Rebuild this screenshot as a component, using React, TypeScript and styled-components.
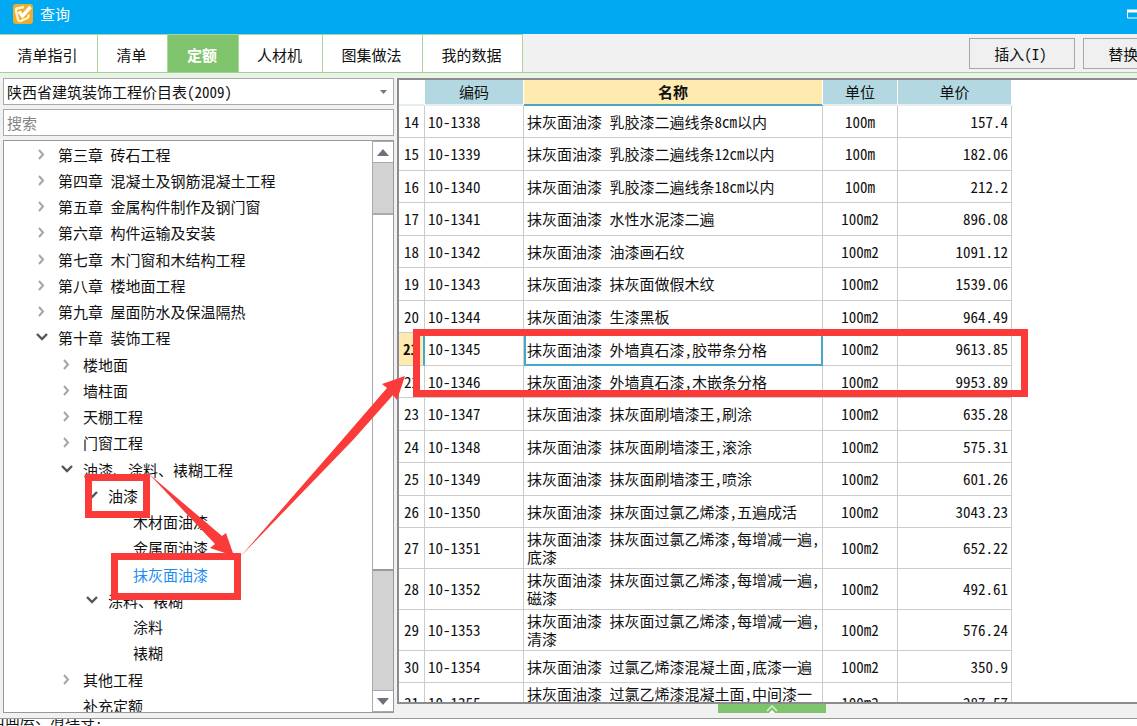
import React from 'react';
import styled, { createGlobalStyle, css } from 'styled-components';

const cjk = "'Noto Sans Mono CJK SC', 'Noto Sans CJK SC', sans-serif";

const GlobalStyle = createGlobalStyle`
  * { box-sizing: border-box; }
  body { margin: 0; background: #fff; }
  body, button, input, select, table {
    font-family: ${cjk};
    font-size: 15px;
    line-height: 18px;
    color: #111;
  }
  button, input, select { margin: 0; padding: 0; border-radius: 0; }
`;

const Window = styled.div`
  position: relative;
  display: flex;
  flex-direction: column;
  height: 100vh;
  overflow: hidden;
  background: #f1f1f1;
`;

const TitleBar = styled.header`
  display: flex;
  align-items: center;
  flex: none;
  height: 34px;
  padding: 0 0 6px 13px;
  gap: 7px;
  background: #00a9f2;
  color: #fff;
  overflow: hidden;
`;

const Title = styled.h1`
  flex: 1;
  margin: 0;
  font-size: 15px;
  font-weight: 400;
`;

const WindowButton = styled.button`
  width: 10px;
  height: 10px;
  border: 0;
  background: none;
  overflow: hidden;
  svg { display: block; }
`;

const TabBar = styled.div`
  display: flex;
  flex: none;
  height: 39px;
  border-bottom: 1px solid #a3cf98;
  overflow: hidden;
`;

const Tabs = styled.nav`
  display: flex;
  flex: 1;
`;

const Tab = styled.button<{ $width: number; $active?: boolean }>`
  flex: none;
  width: ${p => p.$width}px;
  height: 38px;
  padding: 3px 2px 0 0;
  border: 0;
  border-top: 1px solid #a9d79b;
  border-right: 1px solid #a9d79b;
  background: ${p => (p.$active ? '#7fc46c' : '#fff')};
  color: ${p => (p.$active ? '#fff' : '#111')};
  font-weight: ${p => (p.$active ? 700 : 400)};
`;

const Actions = styled.div`
  display: flex;
  flex: none;
  gap: 8px;
  width: 168px;
  padding-top: 4px;
  overflow: hidden;
`;

const ActionButton = styled.button`
  flex: none;
  width: 106px;
  height: 31px;
  padding-right: 3px;
  border: 1px solid #a6a6a6;
  background: #f0f0f0;
`;

const Body = styled.main`
  display: flex;
  flex: 1;
  min-height: 0;
  padding-top: 5px;
  background: linear-gradient(#e9f4e6 5px, #f1f1f1 5px);
  border-bottom: 1px solid #999;
`;

const Sidebar = styled.aside`
  display: flex;
  flex-direction: column;
  flex: none;
  gap: 4px;
  width: 397px;
  padding: 0 3px 5px;
`;

const field = css`
  flex: none;
  height: 27px;
  border: 1px solid #aaa;
  background: #fff;
`;

const SelectBox = styled.div`
  ${field}
  display: flex;
  align-items: center;
  padding-right: 6px;
`;

const BookSelect = styled.select`
  flex: 1;
  height: 24px;
  padding-left: 3px;
  appearance: none;
  border: 0;
  background: none;
`;

const SearchInput = styled.input`
  ${field}
  padding-left: 3px;
  &::placeholder { color: #858585; opacity: 1; }
`;

const TreePanel = styled.div`
  display: flex;
  flex: 1;
  min-height: 0;
  border: 1px solid #999;
  background: #fff;
  overflow: hidden;
`;

const Tree = styled.ul`
  flex: 1;
  margin: 0;
  padding: 1px 0 0;
  list-style: none;
`;

const TreeItem = styled.li`
  height: 26px;
  &:nth-child(4n) { height: 27px; }
`;

const TreeButton = styled.button<{ $level: number; $selected?: boolean }>`
  display: flex;
  align-items: center;
  gap: 9px;
  height: 26px;
  padding-left: ${p => 31 + p.$level * 25}px;
  border: 0;
  background: none;
  white-space: pre;
  color: ${p => (p.$selected ? '#1c8df0' : '#111')};
  svg { flex: none; }
`;

const Scrollbar = styled.div`
  display: flex;
  flex-direction: column;
  flex: none;
  width: 21px;
  border-left: 1px solid #aaa;
  background: #d2d2d2;
`;

const ScrollButton = styled.button`
  display: grid;
  place-items: center;
  flex: none;
  width: 20px;
  height: 22px;
  border: 0;
  border-top: 1px solid #aaa;
  border-bottom: 1px solid #aaa;
  background: #fff;
`;

const ScrollGap = styled.div<{ $grow: number }>`
  flex: ${p => p.$grow} 1 0;
`;

const ScrollThumb = styled.div`
  flex: 358 1 0;
  border-top: 2px solid #aaa;
  border-bottom: 2px solid #999;
  background: #fff;
`;

const Content = styled.section`
  display: flex;
  flex-direction: column;
  flex: 1;
  min-width: 0;
`;

const GridPanel = styled.div`
  flex: 1;
  min-height: 0;
  border: solid #8b8b90;
  border-width: 2px 0 2px 2px;
  background: #fff;
  overflow: hidden;
`;

const Grid = styled.table`
  width: 613px;
  table-layout: fixed;
  border-collapse: separate;
  border-spacing: 0;
`;

const HeadCell = styled.th<{ $current?: boolean; $blank?: boolean }>`
  height: 26px;
  padding: 0;
  font-weight: ${p => (p.$current ? 700 : 400)};
  border-right: 1px solid #fff;
  border-bottom: ${p => (p.$current ? '2px solid #4aa5c4' : '2px solid #e4eef0')};
  background: ${p => (p.$blank ? '#fff' : p.$current ? '#ffebb0' : '#b3d8e2')};
`;

const Row = styled.tr<{ $tall?: boolean }>`
  height: ${p => (p.$tall ? 41 : 32)}px;
  &:nth-child(even) { height: ${p => (p.$tall ? 41 : 33)}px; }
`;

const Cell = styled.td<{ $align?: string; $current?: boolean }>`
  padding: 0 3px;
  border-right: 1px solid #ccc;
  border-bottom: 1px solid #ccc;
  text-align: ${p => p.$align || 'left'};
  white-space: nowrap;
  overflow: hidden;
  ${p => p.$current && css`
    border: 2px solid #45a8cd;
    padding: 0 1px;
  `}
`;

const NumberCell = styled(Cell)<{ $marked?: boolean }>`
  padding: 0 5px;
  ${p => p.$marked && css`
    padding: 0 4px;
    background: #ffebb0;
    border-right: 2px solid #45a8cd;
    font-weight: 700;
  `}
`;

const Splitter = styled.div`
  display: flex;
  flex: none;
  height: 14px;
  padding-left: 321px;
`;

const SplitHandle = styled.button`
  display: grid;
  place-items: end center;
  width: 108px;
  height: 9px;
  border: 0;
  background: #7fc46c;
  svg { display: block; }
`;

const Footer = styled.footer`
  display: flex;
  align-items: flex-end;
  flex: none;
  height: 7px;
  background: #fff;
  overflow: hidden;
`;

const FooterText = styled.span`
  flex: none;
  margin-left: -10px;
  line-height: 16px;
`;

const Markup = styled.svg`
  position: absolute;
  top: 0;
  left: 0;
  pointer-events: none;
`;

type Node = { label: string; level: number; state?: 'open' | 'closed'; selected?: boolean };

const nodes: Node[] = [
  { label: '第三章 砖石工程', level: 0, state: 'closed' },
  { label: '第四章 混凝土及钢筋混凝土工程', level: 0, state: 'closed' },
  { label: '第五章 金属构件制作及钢门窗', level: 0, state: 'closed' },
  { label: '第六章 构件运输及安装', level: 0, state: 'closed' },
  { label: '第七章 木门窗和木结构工程', level: 0, state: 'closed' },
  { label: '第八章 楼地面工程', level: 0, state: 'closed' },
  { label: '第九章 屋面防水及保温隔热', level: 0, state: 'closed' },
  { label: '第十章 装饰工程', level: 0, state: 'open' },
  { label: '楼地面', level: 1, state: 'closed' },
  { label: '墙柱面', level: 1, state: 'closed' },
  { label: '天棚工程', level: 1, state: 'closed' },
  { label: '门窗工程', level: 1, state: 'closed' },
  { label: '油漆、涂料、裱糊工程', level: 1, state: 'open' },
  { label: '油漆', level: 2, state: 'open' },
  { label: '木材面油漆', level: 3 },
  { label: '金属面油漆', level: 3 },
  { label: '抹灰面油漆', level: 3, selected: true },
  { label: '涂料、裱糊', level: 2, state: 'open' },
  { label: '涂料', level: 3 },
  { label: '裱糊', level: 3 },
  { label: '其他工程', level: 1, state: 'closed' },
  { label: '补充定额', level: 1 },
];

type Item = { no: number; name: string[]; unit: string; price: string };

const items: Item[] = [
  { no: 14, name: ['抹灰面油漆 乳胶漆二遍线条8cm以内'], unit: '100m', price: '157.4' },
  { no: 15, name: ['抹灰面油漆 乳胶漆二遍线条12cm以内'], unit: '100m', price: '182.06' },
  { no: 16, name: ['抹灰面油漆 乳胶漆二遍线条18cm以内'], unit: '100m', price: '212.2' },
  { no: 17, name: ['抹灰面油漆 水性水泥漆二遍'], unit: '100m2', price: '896.08' },
  { no: 18, name: ['抹灰面油漆 油漆画石纹'], unit: '100m2', price: '1091.12' },
  { no: 19, name: ['抹灰面油漆 抹灰面做假木纹'], unit: '100m2', price: '1539.06' },
  { no: 20, name: ['抹灰面油漆 生漆黑板'], unit: '100m2', price: '964.49' },
  { no: 21, name: ['抹灰面油漆 外墙真石漆,胶带条分格'], unit: '100m2', price: '9613.85' },
  { no: 22, name: ['抹灰面油漆 外墙真石漆,木嵌条分格'], unit: '100m2', price: '9953.89' },
  { no: 23, name: ['抹灰面油漆 抹灰面刷墙漆王,刷涂'], unit: '100m2', price: '635.28' },
  { no: 24, name: ['抹灰面油漆 抹灰面刷墙漆王,滚涂'], unit: '100m2', price: '575.31' },
  { no: 25, name: ['抹灰面油漆 抹灰面刷墙漆王,喷涂'], unit: '100m2', price: '601.26' },
  { no: 26, name: ['抹灰面油漆 抹灰面过氯乙烯漆,五遍成活'], unit: '100m2', price: '3043.23' },
  { no: 27, name: ['抹灰面油漆 抹灰面过氯乙烯漆,每增减一遍,', '底漆'], unit: '100m2', price: '652.22' },
  { no: 28, name: ['抹灰面油漆 抹灰面过氯乙烯漆,每增减一遍,', '磁漆'], unit: '100m2', price: '492.61' },
  { no: 29, name: ['抹灰面油漆 抹灰面过氯乙烯漆,每增减一遍,', '清漆'], unit: '100m2', price: '576.24' },
  { no: 30, name: ['抹灰面油漆 过氯乙烯漆混凝土面,底漆一遍'], unit: '100m2', price: '350.9' },
  { no: 31, name: ['抹灰面油漆 过氯乙烯漆混凝土面,中间漆一', '遍'], unit: '100m2', price: '287.57' },
];

const Chevron = ({ open }: { open: boolean }) => (
  <svg width="14" height="12" viewBox="0 0 14 12" fill="none">
    {open
      ? <path d="M2 2l5 5 5-5" stroke="#555" strokeWidth="2.4" />
      : <path d="M4 1l4 4.500-4 4.500" stroke="#a5a5a5" strokeWidth="2" />}
  </svg>
);

const Logo = () => (
  <svg width="20" height="20" viewBox="0 0 20 20" fill="none">
    <rect width="20" height="20" rx="3" fill="#f0ad2b" />
    <path d="M11 3L4 4.500Q2.500 5 3 7l2 8.500Q5.500 17.500 7.500 17l7-3Q16 13 15.500 10.500" stroke="#fff3d0" strokeWidth="2.4" />
    <path d="M6 7.500l3.500 4.500L17.500 3" stroke="#fff" strokeWidth="3.4" />
  </svg>
);

const Triangle = ({ up }: { up?: boolean }) => (
  <svg width="12" height="7" viewBox="0 0 12 7">
    <path d={up ? 'M0 7l6-7 6 7z' : 'M0 0h12l-6 7z'} fill="#70707c" />
  </svg>
);

export default function App() {
  return (
    <Window>
      <GlobalStyle />
      <TitleBar>
        <Logo />
        <Title>查询</Title>
        <WindowButton aria-label="最大化">
          <svg width="14" height="10" viewBox="0 0 14 10" fill="none">
            <path d="M0 2h14" stroke="#fff" strokeWidth="3" />
            <path d="M.5 1v8H14" stroke="#fff" />
          </svg>
        </WindowButton>
      </TitleBar>
      <TabBar>
        <Tabs>
          <Tab $width={98}>清单指引</Tab>
          <Tab $width={70}>清单</Tab>
          <Tab $width={71} $active>定额</Tab>
          <Tab $width={84}>人材机</Tab>
          <Tab $width={100}>图集做法</Tab>
          <Tab $width={100}>我的数据</Tab>
        </Tabs>
        <Actions>
          <ActionButton>插入(I)</ActionButton>
          <ActionButton>替换(R)</ActionButton>
        </Actions>
      </TabBar>
      <Body>
        <Sidebar>
          <SelectBox>
            <BookSelect aria-label="定额库">
              <option>陕西省建筑装饰工程价目表(2009)</option>
            </BookSelect>
            <svg width="7" height="4" viewBox="0 0 7 4"><path d="M0 0h7L3.500 4z" fill="#777" /></svg>
          </SelectBox>
          <SearchInput aria-label="搜索" placeholder="搜索" />
          <TreePanel>
            <Tree>
              {nodes.map(n => (
                <TreeItem key={n.label}>
                  <TreeButton $level={n.level} $selected={n.selected}>
                    {n.state ? <Chevron open={n.state === 'open'} /> : <svg width="14" height="12" />}
                    {n.label}
                  </TreeButton>
                </TreeItem>
              ))}
            </Tree>
            <Scrollbar>
              <ScrollButton aria-label="向上"><Triangle up /></ScrollButton>
              <ScrollGap $grow={50} />
              <ScrollThumb />
              <ScrollGap $grow={120} />
              <ScrollButton aria-label="向下"><Triangle /></ScrollButton>
            </Scrollbar>
          </TreePanel>
        </Sidebar>
        <Content>
          <GridPanel>
            <Grid>
              <colgroup>
                <col width="26" /><col width="99" /><col width="299" /><col width="75" /><col width="114" />
              </colgroup>
              <thead>
                <tr>
                  <HeadCell $blank />
                  <HeadCell>编码</HeadCell>
                  <HeadCell $current>名称</HeadCell>
                  <HeadCell>单位</HeadCell>
                  <HeadCell>单价</HeadCell>
                </tr>
              </thead>
              <tbody>
                {items.map(it => (
                  <Row key={it.no} $tall={it.name.length > 1}>
                    <NumberCell $marked={it.no === 21}>{it.no}</NumberCell>
                    <Cell>10-{1324 + it.no}</Cell>
                    <Cell $current={it.no === 21}>
                      {it.name.map((line, i) => <React.Fragment key={line}>{i > 0 && <br />}{line}</React.Fragment>)}
                    </Cell>
                    <Cell $align="center">{it.unit}</Cell>
                    <Cell $align="right">{it.price}</Cell>
                  </Row>
                ))}
              </tbody>
            </Grid>
          </GridPanel>
          <Splitter>
            <SplitHandle aria-label="展开">
              <svg width="12" height="8" viewBox="0 0 12 8" fill="none">
                <path d="M1 6l5-5 5 5" stroke="#d9f0d2" strokeWidth="1.500" />
                <path d="M3 8l3-3 3 3z" fill="#fff" />
              </svg>
            </SplitHandle>
          </Splitter>
        </Content>
      </Body>
      <Footer><FooterText>石面层、清理等.</FooterText></Footer>
      <Markup width="1137" height="726" viewBox="0 0 1137 726" fill="none">
        <g stroke="#fb3a3a" strokeWidth="7">
          <rect x="88.500" y="477.500" width="58" height="37" />
          <rect x="114.500" y="556.500" width="123" height="40" />
          <rect x="416.500" y="332.500" width="608" height="61" />
        </g>
        <path d="M149 474L222 536 226 533 234 556 210 548 215 544z" fill="#fb3a3a" />
        <path d="M240 557L342 440 387 388 382 384 405 376 397 400 393 395 353 440z" fill="#fb3a3a" />
      </Markup>
    </Window>
  );
}
